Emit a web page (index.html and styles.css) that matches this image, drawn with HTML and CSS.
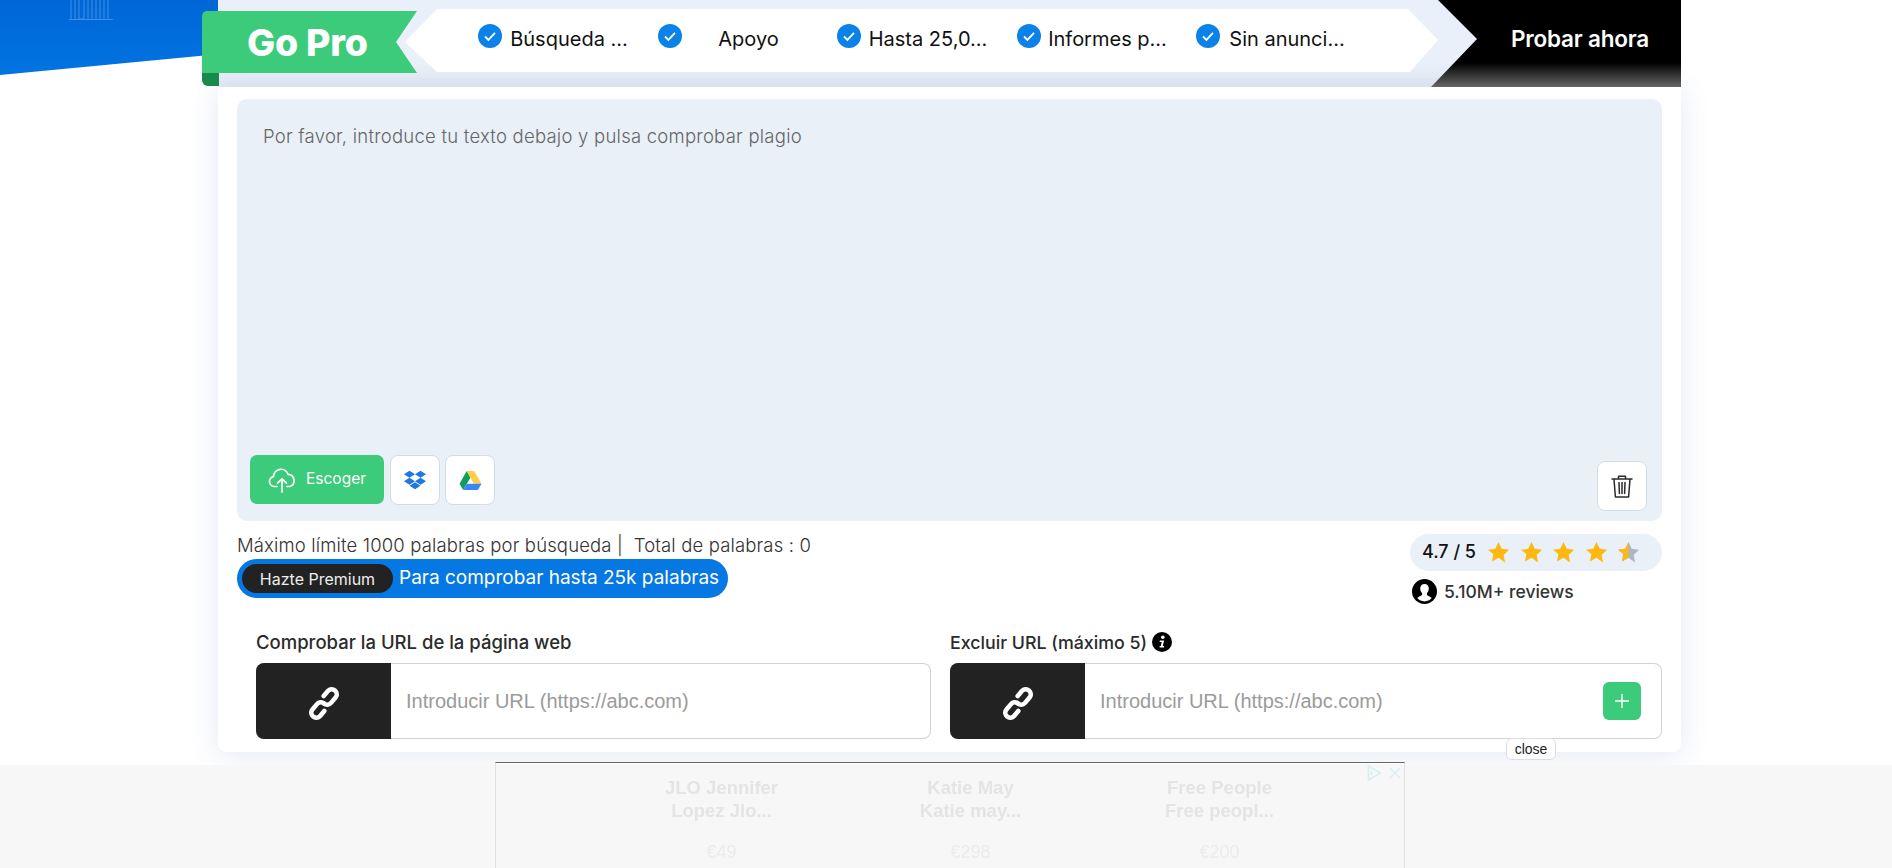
FILE: index.html
```html
<!DOCTYPE html>
<html lang="es">
<head>
    <meta charset="UTF-8">
    <meta name="viewport" content="width=device-width, initial-scale=1.0">
    <title>Comprobador de plagio</title>
    <link rel="stylesheet" href="styles.css">
</head>
<body>
    <div class="hero_bg">
      <svg class="hero_icon" width="44" height="20" viewBox="0 0 44 20" fill="none" stroke="#3c8fe8" stroke-width="1">
        <path d="M0 19.5H44M2 0V19M6 0V19M10 0V19H15V0M19 0V19M23 0V19M27 0V19M31 0V19M35 0V19M39 0V19"/>
      </svg>
    </div>

    <div class="wrap">
      <div class="pro_strip">
        <div class="ribbon">
          <div class="ribbon_face">Go Pro</div>
          <div class="ribbon_fold"></div>
        </div>
        <ul class="features">
          <li>
            <svg class="check" viewBox="0 0 24 24"><circle cx="12" cy="12" r="12" fill="#0b82e8"/><path d="M7 12.5l3.4 3.4L17 8.8" fill="none" stroke="#fff" stroke-width="1.8"/></svg>
            <span>Búsqueda ...</span>
          </li>
          <li>
            <svg class="check" viewBox="0 0 24 24"><circle cx="12" cy="12" r="12" fill="#0b82e8"/><path d="M7 12.5l3.4 3.4L17 8.8" fill="none" stroke="#fff" stroke-width="1.8"/></svg>
            <span>Apoyo</span>
          </li>
          <li>
            <svg class="check" viewBox="0 0 24 24"><circle cx="12" cy="12" r="12" fill="#0b82e8"/><path d="M7 12.5l3.4 3.4L17 8.8" fill="none" stroke="#fff" stroke-width="1.8"/></svg>
            <span>Hasta 25,0...</span>
          </li>
          <li>
            <svg class="check" viewBox="0 0 24 24"><circle cx="12" cy="12" r="12" fill="#0b82e8"/><path d="M7 12.5l3.4 3.4L17 8.8" fill="none" stroke="#fff" stroke-width="1.8"/></svg>
            <span>Informes p...</span>
          </li>
          <li>
            <svg class="check" viewBox="0 0 24 24"><circle cx="12" cy="12" r="12" fill="#0b82e8"/><path d="M7 12.5l3.4 3.4L17 8.8" fill="none" stroke="#fff" stroke-width="1.8"/></svg>
            <span>Sin anunci...</span>
          </li>
        </ul>
        <a class="try_btn">Probar ahora</a>
      </div>

      <div class="card">
        <div class="editor">
          <textarea placeholder="Por favor, introduce tu texto debajo y pulsa comprobar plagio"></textarea>
          <div class="tools">
            <button class="choose_btn">
              <svg width="28" height="26" viewBox="0 0 28 26" fill="none" stroke="#fff" stroke-width="1.7" stroke-linecap="round" stroke-linejoin="round">
                <path d="M9 19.5H6.5a5 5 0 0 1-1-9.9 7.5 7.5 0 0 1 14.6-2.2 6.2 6.2 0 0 1 1.6 12.1H19"/>
                <path d="M14 25V12M9.5 16.2L14 11.8l4.5 4.4"/>
              </svg>
              <span>Escoger</span>
            </button>
            <button class="icon_btn">
              <svg width="22" height="22" viewBox="0 0 24 24" fill="#1f78e0"><path d="M6 1.807L0 5.629l6 3.822 6.001-3.822L6 1.807zM18 1.807l-6 3.822 6 3.822 6-3.822-6-3.822zM0 13.274l6 3.822 6.001-3.822L6 9.452l-6 3.822zM18 9.452l-6 3.822 6 3.822 6-3.822-6-3.822zM6 18.371l6.001 3.822 6-3.822-6-3.822L6 18.371z"/></svg>
            </button>
            <button class="icon_btn">
              <svg width="23" height="21" viewBox="0 0 24 22">
                <path d="M8 1L0.5 14.5l3.8 6.5L12 7.8z" fill="#0f9d58"/>
                <path d="M8 1h8l7.5 13.5h-8z" fill="#ffcf47"/>
                <path d="M8.3 14.5h15.2L19.7 21H4.4z" fill="#3b86f6"/>
              </svg>
            </button>
          </div>
          <button class="icon_btn trash_btn">
            <svg width="22" height="24" viewBox="0 0 22 24" fill="none" stroke="#2b2b2b" stroke-width="1.5" stroke-linejoin="round" stroke-linecap="round">
              <path d="M1 5h20M7.5 5V2.2h7V5M3 5l1.4 18h13.2L19 5M8 8.5l.4 11M11 8.5v11M14 8.5l-.4 11"/>
            </svg>
          </button>
        </div>

        <div class="meta">
          <div>
            <p class="count">Máximo límite 1000 palabras por búsqueda |&nbsp; Total de palabras : 0</p>
            <div class="premium">
              <a class="premium_tag">Hazte Premium</a>
              <span>Para comprobar hasta 25k palabras</span>
            </div>
          </div>
          <div class="rating_box">
            <div class="rating">
              <b>4.7 / 5</b>
              <div class="stars">
                <svg viewBox="0 0 24 24"><path d="M12 1l3.4 7.2 7.6 1-5.600 5.400 1.400 7.800L12 17.600l-6.800 3.800 1.400-7.800L1 9.200l7.600-1z" fill="#fdb813"/></svg>
                <svg viewBox="0 0 24 24"><path d="M12 1l3.4 7.2 7.6 1-5.600 5.400 1.400 7.800L12 17.600l-6.800 3.800 1.400-7.800L1 9.200l7.600-1z" fill="#fdb813"/></svg>
                <svg viewBox="0 0 24 24"><path d="M12 1l3.4 7.2 7.6 1-5.600 5.400 1.400 7.800L12 17.600l-6.800 3.800 1.400-7.800L1 9.200l7.600-1z" fill="#fdb813"/></svg>
                <svg viewBox="0 0 24 24"><path d="M12 1l3.4 7.2 7.6 1-5.600 5.400 1.400 7.800L12 17.600l-6.800 3.800 1.400-7.800L1 9.200l7.600-1z" fill="#fdb813"/></svg>
                <svg viewBox="0 0 24 24"><path d="M12 1l3.4 7.2 7.6 1-5.600 5.400 1.400 7.800L12 17.600l-6.800 3.800 1.400-7.800L1 9.200l7.600-1z" fill="#adb6c6"/><path d="M12 1v16.600l-6.800 3.800 1.400-7.800L1 9.200l7.600-1z" fill="#fdb813"/></svg>
              </div>
            </div>
            <div class="reviews">
              <svg width="25" height="25" viewBox="0 0 25 25"><circle cx="12.500" cy="12.500" r="12.500"/><path d="M12.500 5c2.700 0 4.300 2 4.300 4.600 0 2-.9 3.700-1.900 4.700v1.500c0 .7 3.300 1.600 4.800 3.300a9.500 9.500 0 0 1-14.400 0c1.500-1.700 4.800-2.600 4.800-3.300v-1.500c-1-1-1.900-2.700-1.900-4.700C8.200 7 9.800 5 12.500 5z" fill="#fff"/></svg>
              <span>5.10M+ reviews</span>
            </div>
          </div>
        </div>

        <div class="url_row">
          <div class="url_col url_left">
            <label>Comprobar la URL de la página web</label>
            <div class="url_box">
              <div class="url_icon">
                <svg width="30" height="33" viewBox="0 0 30 33" fill="none" stroke="#fff" stroke-width="4.600" stroke-linecap="round"><g transform="rotate(-50 15 16.500)"><path d="M9.500 21.500H3a5 5 0 0 1 0-10H10a5 5 0 0 1 5 5"/><path d="M20.500 11.500H27a5 5 0 0 1 0 10H20a5 5 0 0 1-5-5"/></g></svg>
              </div>
              <input type="text" placeholder="Introducir URL (https://abc.com)">
            </div>
          </div>
          <div class="url_col url_right">
            <label>Excluir URL (máximo 5)
              <svg width="20" height="20" viewBox="0 0 20 20"><circle cx="10" cy="10" r="10"/><circle cx="10.800" cy="5.300" r="1.800" fill="#fff"/><path d="M7.800 8.600h4.300l-1.300 5.500h1.300v1.500H7.600l.1-1.500h1l1-4H7.600z" fill="#fff"/></svg>
            </label>
            <div class="url_box">
              <div class="url_icon">
                <svg width="30" height="33" viewBox="0 0 30 33" fill="none" stroke="#fff" stroke-width="4.600" stroke-linecap="round"><g transform="rotate(-50 15 16.500)"><path d="M9.500 21.500H3a5 5 0 0 1 0-10H10a5 5 0 0 1 5 5"/><path d="M20.500 11.500H27a5 5 0 0 1 0 10H20a5 5 0 0 1-5-5"/></g></svg>
              </div>
              <input type="text" placeholder="Introducir URL (https://abc.com)">
              <button class="add_btn">
                <svg width="16" height="16" viewBox="0 0 16 16" stroke="#fff" stroke-width="1.500"><path d="M8 1v14M1 8h14"/></svg>
              </button>
            </div>
          </div>
        </div>
      </div>
    </div>

    <div class="ad_footer">
      <a class="ad_close">close</a>
      <div class="ad_frame">
        <div class="ad_marks">
          <svg width="15" height="16" viewBox="0 0 15 16" fill="none" stroke="#d6eff4" stroke-width="1.600"><path d="M1.500 1L13.500 8 1.500 15zM4.500 6v4"/></svg>
          <svg width="12" height="12" viewBox="0 0 12 12" fill="none" stroke="#d6eff4" stroke-width="1.400"><path d="M1 1l10 10M11 1L1 11"/></svg>
        </div>
        <div class="ad_item">
          <h4>JLO Jennifer<br>Lopez Jlo...</h4>
          <p>€49</p>
        </div>
        <div class="ad_item">
          <h4>Katie May<br>Katie may...</h4>
          <p>€298</p>
        </div>
        <div class="ad_item">
          <h4>Free People<br>Free peopl...</h4>
          <p>€200</p>
        </div>
      </div>
    </div>
</body>
</html>
```

FILE: styles.css
```css
*{
    box-sizing: border-box;
}
html,body{
    height: 100%;
}
body{
    margin: 0;
    background: #fff;
    overflow: hidden;
    font-family: "Inter", "Noto Sans", sans-serif;
    color: #333;
}
button{
    cursor: pointer;
    font-family: inherit;
}

/* blue header piece behind the strip */
.hero_bg{
    position: absolute;
    left: 0;
    top: 0;
    width: 220px;
    height: 76px;
    background: linear-gradient(#0066d6, #0274e2);
    clip-path: polygon(0 0, 100% 0, 100% 54px, 0 75px);
}
.hero_icon{
    position: absolute;
    left: 69px;
    top: 0;
}

.wrap{
    position: relative;
    width: 1463px;
    margin-left: 218px;
}

/* go pro strip */
.pro_strip{
    display: flex;
    height: 87px;
    background: linear-gradient(#e9f0f9 75%, #e3e9f3 100%);
}
.ribbon{
    flex: none;
    width: 215px;
    margin: 11px 0 0 -16px;
    position: relative;
    z-index: 2;
}
.ribbon_face{
    height: 62px;
    padding-left: 45px;
    background: #3bcb7a;
    color: #fff;
    font-size: 37.500px;
    font-weight: 800;
    line-height: 64px;
    letter-spacing: -0.2px;
    border-radius: 5px 0 0 0;
    clip-path: polygon(0 0, 100% 0, 194px 31px, 100% 100%, 0 100%);
}
.ribbon_fold{
    width: 17px;
    height: 13px;
    background: #1a8a4c;
    border-radius: 0 0 0 6px;
}
.features{
    flex: none;
    display: flex;
    width: 1033px;
    height: 63px;
    margin: 9px 0 0 -12px;
    padding: 15px 0 0 73px;
    list-style: none;
    background: #fff;
    clip-path: polygon(32px 0, 1003px 0, 1033px 31px, 1005px 100%, 32px 100%, 0 33px);
}
.features li{
    flex: none;
    display: flex;
    width: 179.500px;
}
.check{
    flex: none;
    width: 24px;
    height: 24px;
}
.features span{
    width: 120px;
    margin-left: 7px;
    margin-top: 1px;
    white-space: nowrap;
    text-align: center;
    font-size: 20px;
    line-height: 28px;
    color: #111;
}
.try_btn{
    flex: none;
    width: 250px;
    margin-left: -7px;
    padding: 26px 0 0 80px;
    background: linear-gradient(#000 72%, #666 100%);
    color: #fff;
    font-size: 22.500px;
    font-weight: 600;
    letter-spacing: -0.2px;
    line-height: 26px;
    white-space: nowrap;
    clip-path: polygon(7px 0, 100% 0, 100% 100%, 0 100%, 46px 39px);
}

/* main card */
.card{
    height: 665px;
    padding: 12px 19px 0;
    background: #fff;
    border-radius: 0 0 8px 8px;
    box-shadow: 0 4px 30px rgba(60, 90, 160, 0.14);
}
.editor{
    position: relative;
    height: 422px;
}
.editor textarea{
    display: block;
    width: 100%;
    height: 100%;
    padding: 24px 26px;
    background: #e9f0f8;
    border: 0;
    border-radius: 10px;
    outline: none;
    resize: none;
    font-family: inherit;
    font-size: 18.500px;
    font-weight: 300;
    letter-spacing: 0.24px;
    line-height: 26px;
}
.editor textarea::placeholder{
    color: #666;
    opacity: 1;
}
.tools{
    position: absolute;
    left: 13px;
    bottom: 16px;
    display: flex;
    gap: 6px;
}
.tools .icon_btn + .icon_btn{
    margin-left: -1px;
}
.choose_btn{
    display: flex;
    align-items: center;
    gap: 10px;
    width: 134px;
    height: 49px;
    padding: 0 0 0 18px;
    background: #3bcb7a;
    border: 0;
    border-radius: 7px;
    color: #fff;
    font-size: 15.500px;
}
.choose_btn span{
    margin-top: -3px;
}
.icon_btn{
    display: flex;
    align-items: center;
    justify-content: center;
    width: 50px;
    height: 50px;
    padding: 0;
    background: #fff;
    border: 1px solid #d3dcea;
    border-radius: 8px;
}
.trash_btn{
    position: absolute;
    right: 15px;
    bottom: 10px;
}

.meta{
    display: flex;
    justify-content: space-between;
    margin-top: 13px;
}
.count{
    margin: 0;
    font-size: 18.500px;
    font-weight: 300;
    letter-spacing: 0.15px;
    line-height: 22px;
    color: #333;
}
.premium{
    display: inline-flex;
    align-items: center;
    width: 491px;
    height: 39px;
    margin-top: 3px;
    padding-left: 5px;
    background: #0678e3;
    border-radius: 20px;
    color: #fff;
}
.premium_tag{
    width: 151px;
    height: 29px;
    background: #222;
    border-radius: 15px;
    font-size: 16px;
    line-height: 30px;
    text-align: center;
    color: #eee;
}
.premium span{
    margin-left: 6px;
    margin-top: -3px;
    font-size: 19px;
}
.rating_box{
    width: 252px;
}
.rating{
    display: flex;
    align-items: center;
    height: 37px;
    padding-left: 12px;
    background: #e9f0f8;
    border-radius: 19px;
    font-size: 18px;
}
.rating b{
    font-weight: 500;
    color: #111;
    width: 65px;
    margin-top: -3px;
}
.stars{
    display: flex;
    gap: 9.500px;
}
.stars svg{
    width: 23px;
    height: 23px;
}
.reviews{
    display: flex;
    align-items: center;
    gap: 7px;
    margin: 8px 0 0 2px;
    font-size: 17.500px;
    font-weight: 500;
    color: #333;
}

/* url fields */
.url_row{
    display: flex;
    gap: 19px;
    margin-top: 25px;
    padding-left: 19px;
}
.url_left{
    width: 675px;
}
.url_right{
    flex: 1;
}
.url_col label{
    display: flex;
    align-items: center;
    gap: 5px;
    height: 26px;
    margin-bottom: 8px;
    font-size: 17.800px;
    font-weight: 500;
    color: #2b2b2b;
}
.url_left label{
    font-size: 18.500px;
}
.url_box{
    display: flex;
    align-items: center;
    height: 76px;
    border-radius: 8px;
    box-shadow: inset 0 0 0 1px #cbd3df;
    overflow: hidden;
}
.url_icon{
    flex: none;
    display: flex;
    align-items: center;
    justify-content: center;
    width: 135px;
    height: 76px;
    padding-top: 5px;
    background: #222;
}
.url_box input{
    flex: 1;
    min-width: 0;
    height: 74px;
    padding: 0 15px;
    background: transparent;
    border: 0;
    outline: none;
    font-family: "Liberation Sans", sans-serif;
    font-size: 20px;
}
.url_box input::placeholder{
    color: #9b9b9b;
    opacity: 1;
}
.add_btn{
    flex: none;
    display: flex;
    align-items: center;
    justify-content: center;
    width: 38px;
    height: 38px;
    margin-right: 21px;
    padding: 0;
    background: #3bcb7a;
    border: 0;
    border-radius: 6px;
}

/* sticky ad at the bottom */
.ad_footer{
    position: fixed;
    left: 0;
    right: 0;
    bottom: 0;
    height: 103px;
    background: #f7f7f7;
}
.ad_close{
    position: absolute;
    left: 1506px;
    top: -27px;
    width: 50px;
    height: 22px;
    background: #fff;
    border: 1px solid #ddd;
    border-radius: 6px;
    font-family: "Liberation Sans", sans-serif;
    font-size: 14px;
    line-height: 20px;
    text-align: center;
    color: #222;
}
.ad_frame{
    position: relative;
    display: flex;
    width: 910px;
    height: 106px;
    margin: 0 0 0 495px;
    padding: 0 0 0 101px;
    top: -3px;
    border: 1px solid #e2e2e2;
    border-top: 1px solid #666;
    border-bottom: 0;
    box-shadow: inset 0 1px 0 #fff;
    font-family: "Liberation Sans", sans-serif;
}
.ad_marks{
    position: absolute;
    right: 3px;
    top: 2px;
    display: flex;
    align-items: center;
    gap: 7px;
}
.ad_item{
    flex: none;
    width: 249px;
    text-align: center;
}
.ad_item h4{
    margin: 13px 0 0;
    font-size: 18.500px;
    font-weight: 700;
    line-height: 23px;
    color: #e4e4e4;
}
.ad_item p{
    margin: 20px 0 0;
    font-size: 18px;
    line-height: 20px;
    color: #ebebeb;
}
```
